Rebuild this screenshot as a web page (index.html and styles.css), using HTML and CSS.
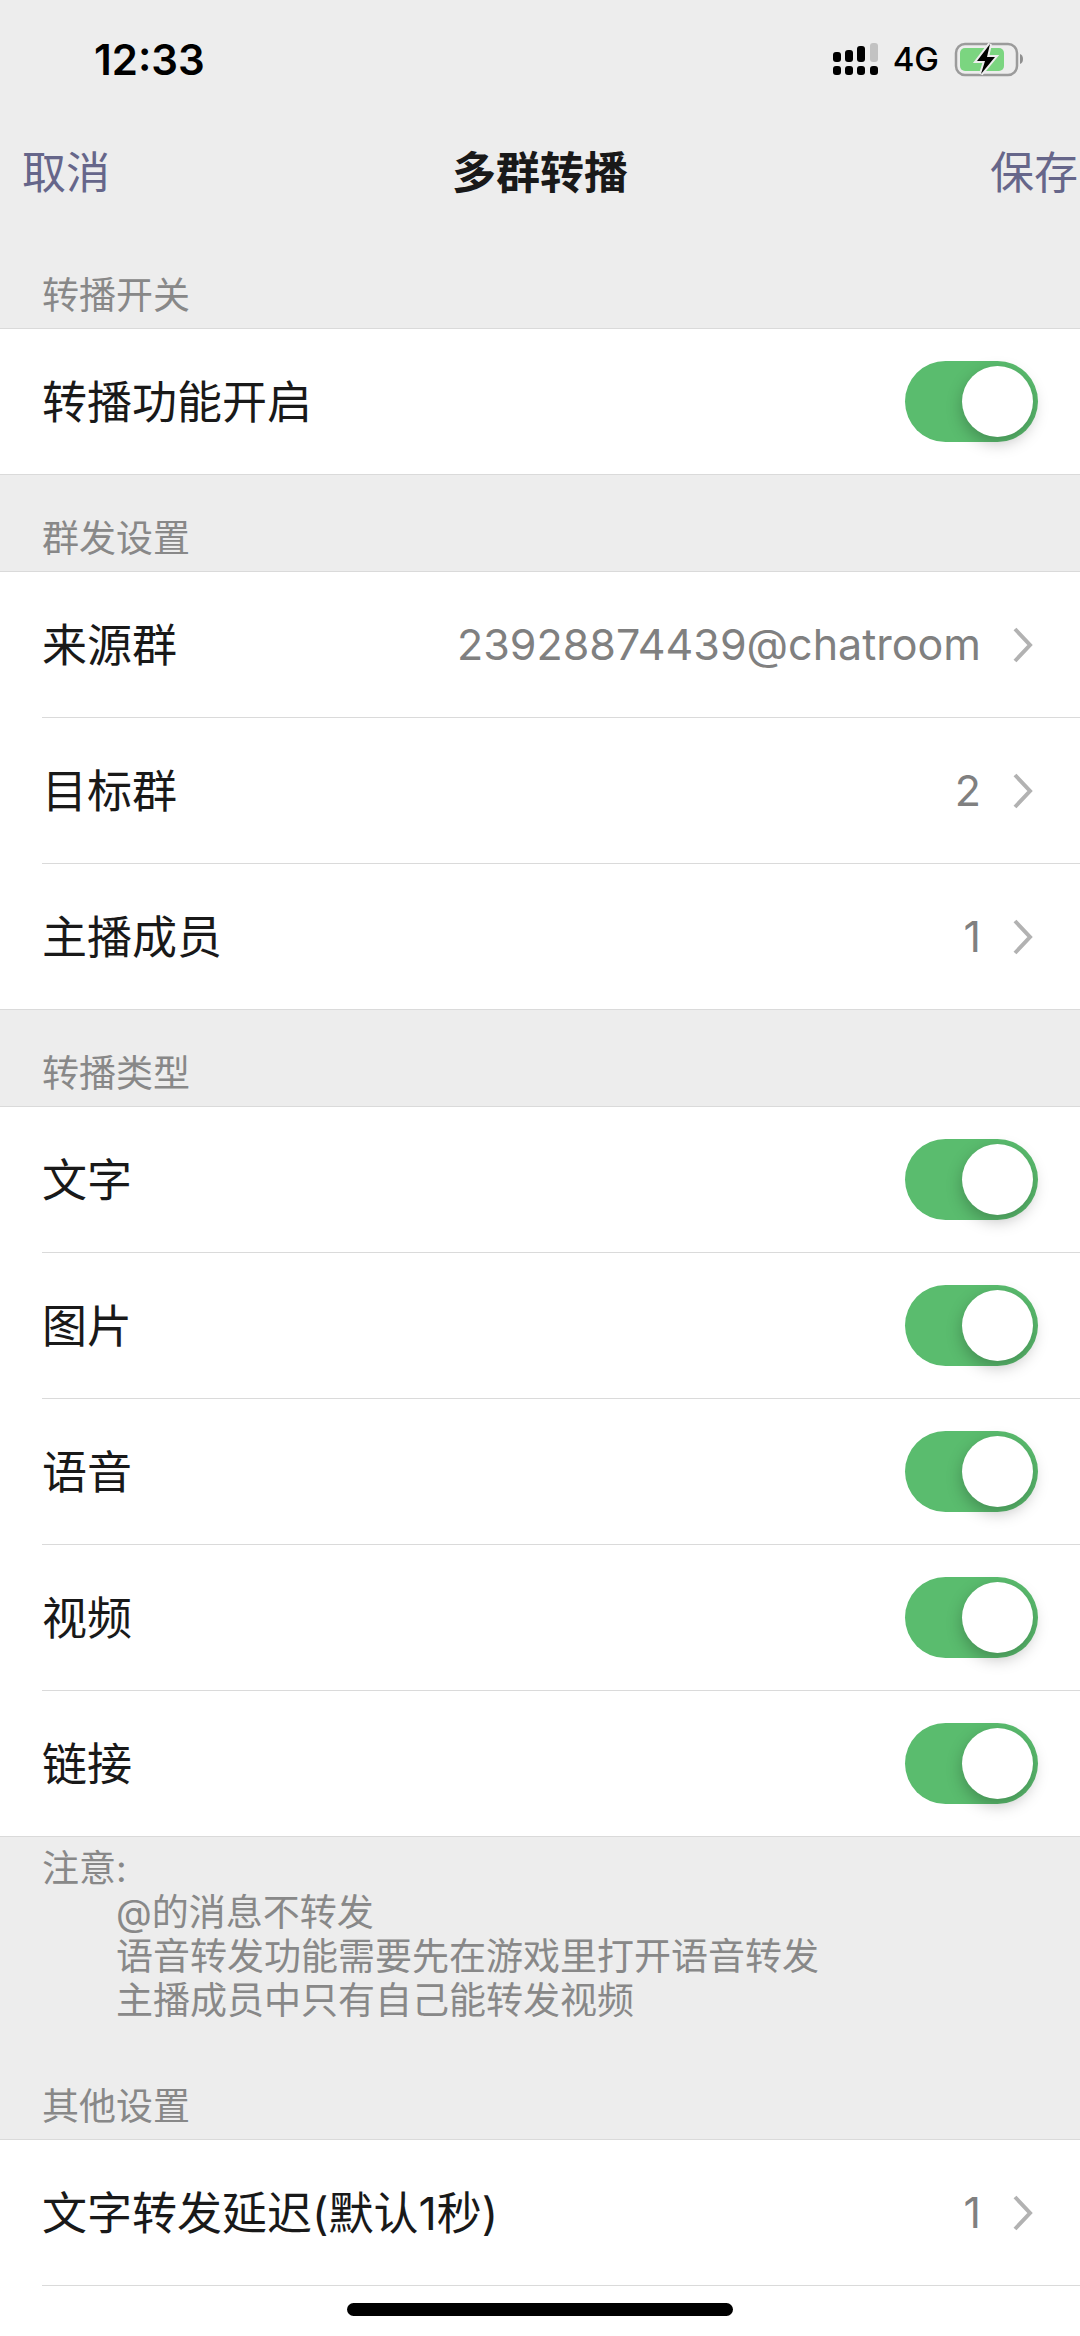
FILE: index.html
```html
<!DOCTYPE html>
<html lang="zh-CN">

<head>
  <meta charset="UTF-8">
  <meta name="viewport" content="width=device-width,initial-scale=1.0">
  <title>多群转播</title>
  <link rel="stylesheet" href="styles.css">
</head>

<body>
  <div class="status-bar">
    <span class="time">12:33</span>
    <div class="status-icons">
      <svg class="signal" width="45" height="34" viewBox="0 0 45 34" aria-hidden="true">
        <rect x="0" y="10" width="8" height="10" rx="3" />
        <rect x="12" y="8" width="8" height="12" rx="3" />
        <rect x="24" y="4" width="8" height="16" rx="3" />
        <rect x="37" y="1" width="8" height="19" rx="3" fill="#c2c2c2" />
        <rect x="0" y="24" width="8" height="9" rx="3" />
        <rect x="12" y="24" width="8" height="9" rx="3" />
        <rect x="24" y="24" width="8" height="9" rx="3" />
        <rect x="37" y="24" width="8" height="9" rx="3" />
      </svg>
      <span class="network">4G</span>
      <svg class="battery" width="70" height="36" viewBox="0 0 70 36" aria-hidden="true">
        <rect x="2" y="3" width="61" height="31" rx="9" fill="none" stroke="#9b9b9b" stroke-width="2.5" />
        <path d="M66 13q3 1 3 5t-3 5z" fill="#8f8f8f" />
        <rect x="6" y="7" width="44" height="23" rx="5" fill="#7bd580" />
        <path d="M36 3L23 20h8l-4 13L41 16h-8z" fill="#000" stroke="#ededed" stroke-width="4" paint-order="stroke" />
      </svg>
    </div>
  </div>

  <header class="nav-bar">
    <button class="nav-button nav-cancel" type="button">取消</button>
    <h1>多群转播</h1>
    <button class="nav-button nav-save" type="button">保存</button>
  </header>

  <main>
    <h2>转播开关</h2>
    <div class="group">
      <label class="row"><span class="name">转播功能开启</span><input class="switch" type="checkbox" checked></label>
    </div>

    <h2>群发设置</h2>
    <div class="group">
      <a class="row" href="#source">
        <span class="name">来源群</span>
        <span class="value">23928874439@chatroom</span>
        <svg class="chevron" width="20" height="36" viewBox="0 0 20 36" aria-hidden="true"><path d="M2 2l15 16L2 34" /></svg>
      </a>
      <a class="row" href="#target">
        <span class="name">目标群</span>
        <span class="value">2</span>
        <svg class="chevron" width="20" height="36" viewBox="0 0 20 36" aria-hidden="true"><path d="M2 2l15 16L2 34" /></svg>
      </a>
      <a class="row" href="#members">
        <span class="name">主播成员</span>
        <span class="value">1</span>
        <svg class="chevron" width="20" height="36" viewBox="0 0 20 36" aria-hidden="true"><path d="M2 2l15 16L2 34" /></svg>
      </a>
    </div>

    <h2>转播类型</h2>
    <div class="group">
      <label class="row"><span class="name">文字</span><input class="switch" type="checkbox" checked></label>
      <label class="row"><span class="name">图片</span><input class="switch" type="checkbox" checked></label>
      <label class="row"><span class="name">语音</span><input class="switch" type="checkbox" checked></label>
      <label class="row"><span class="name">视频</span><input class="switch" type="checkbox" checked></label>
      <label class="row"><span class="name">链接</span><input class="switch" type="checkbox" checked></label>
    </div>

    <div class="note">
      <p>注意:</p>
      <p class="indent">@的消息不转发</p>
      <p class="indent">语音转发功能需要先在游戏里打开语音转发</p>
      <p class="indent">主播成员中只有自己能转发视频</p>
    </div>

    <h2>其他设置</h2>
    <div class="group group-open">
      <a class="row" href="#delay">
        <span class="name">文字转发延迟(默认1秒)</span>
        <span class="value">1</span>
        <svg class="chevron" width="20" height="36" viewBox="0 0 20 36" aria-hidden="true"><path d="M2 2l15 16L2 34" /></svg>
      </a>
    </div>
  </main>

  <div class="home-indicator"></div>
</body>

</html>
```

FILE: styles.css
```css
* {
  box-sizing: border-box;
}

body {
  display: flex;
  flex-direction: column;
  min-height: 100vh;
  margin: 0;
  background: #ededed;
  color: #191919;
  font-family: Inter, "Noto Sans CJK SC", sans-serif;
  font-size: 45px;
}

h1,
h2,
p {
  margin: 0;
}

/* ---------- 状态栏 / 导航栏 ---------- */
.status-bar {
  display: flex;
  justify-content: space-between;
  align-items: center;
  height: 118px;
  padding: 0 56px 0 94px;
  color: #000;
}

.time {
  font-size: 42px;
  font-weight: 600;
}

.status-icons {
  display: flex;
  align-items: center;
  gap: 15px;
}

.network {
  font-size: 33px;
  font-weight: 500;
}

.nav-bar {
  display: grid;
  grid-template-columns: 1fr auto 1fr;
  align-items: center;
  height: 114px;
  padding-bottom: 10px;
}

.nav-bar h1 {
  font-size: 44px;
  font-weight: 600;
}

.nav-button {
  border: 0;
  background: none;
  color: #66668a;
  font: inherit;
  font-size: 44px;
  cursor: pointer;
}

.nav-cancel {
  justify-self: start;
  padding: 0 0 0 22px;
}

.nav-save {
  justify-self: end;
  padding: 0 2px 0 0;
}

/* ---------- 设置列表 ---------- */
main {
  display: flex;
  flex: 1;
  flex-direction: column;
}

h2 {
  height: 97px;
  padding: 42px 42px 0;
  border-bottom: 1px solid #dadada;
  color: #888;
  font-size: 37px;
  font-weight: 400;
  line-height: 44px;
}

.group {
  background: #fff;
}

.group-open {
  flex: 1;
}

.row {
  display: flex;
  align-items: center;
  justify-content: space-between;
  height: 146px;
  margin-left: 42px;
  padding-right: 42px;
  border-bottom: 1px solid #dadada;
  color: inherit;
  text-decoration: none;
}

.group:not(.group-open) .row:last-child {
  margin-left: 0;
  padding-left: 42px;
}

.name {
  padding-bottom: 5px;
}

.value {
  margin-left: auto;
  padding-bottom: 2px;
  color: #808080;
  font-size: 43px;
}

.chevron {
  margin: 0 5px 0 32px;
  fill: none;
  stroke: #b2b2b2;
  stroke-width: 4;
}

.switch {
  appearance: none;
  width: 133px;
  height: 81px;
  margin: 0;
  padding: 5px;
  border-radius: 41px;
  background: #d8d8d8;
  cursor: pointer;
}

.switch::before {
  content: "";
  display: block;
  width: 71px;
  height: 71px;
  border-radius: 50%;
  background: #fff;
  box-shadow: 0 6px 16px rgba(0, 0, 0, 0.25);
}

.switch:checked {
  background: #5abc6e;
}

.switch:checked::before {
  margin-left: auto;
}

.note {
  padding: 10px 42px 20px;
  color: #888;
  font-size: 37px;
  line-height: 44px;
}

.indent {
  padding-left: 2em;
}

.home-indicator {
  position: fixed;
  bottom: 20px;
  left: 50%;
  width: 386px;
  height: 13px;
  margin-left: -193px;
  border-radius: 7px;
  background: #000;
}
```
